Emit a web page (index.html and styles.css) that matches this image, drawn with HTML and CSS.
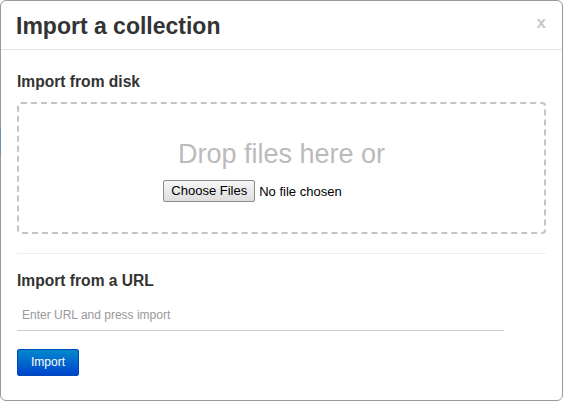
FILE: index.html
```html
<!DOCTYPE html>
<html>
<head>
<meta charset="utf-8">
<link rel="stylesheet" href="styles.css">
</head>
<body>
<div class="backdrop-tab"></div>
<div class="modal">
  <div class="modal-header">
    <h3 class="title">Import a collection</h3>
    <span class="close">x</span>
  </div>
  <div class="modal-body">
    <h4 class="section-title">Import from disk</h4>
    <div class="dropzone">
      <div class="drop-text">Drop files here or</div>
      <div class="file-row">
        <span class="file-btn">Choose Files</span>
        <span class="file-status">No file chosen</span>
      </div>
    </div>
    <div class="divider"></div>
    <h4 class="section-title url-title">Import from a URL</h4>
    <div class="url-input">Enter URL and press import</div>
    <span class="btn-primary">Import</span>
  </div>
</div>
</body>
</html>
```
FILE: styles.css
```css
html, body {
  margin: 0;
  padding: 0;
  background: #fff;
}
body {
  font-family: "Liberation Sans", Arial, sans-serif;
  color: #333;
  position: relative;
  width: 563px;
  height: 401px;
  overflow: hidden;
}
.backdrop-tab {
  position: absolute;
  left: 0;
  top: 128px;
  width: 1px;
  height: 27px;
  background: #6b8fb8;
}
.modal {
  box-sizing: border-box;
  width: 563px;
  height: 401px;
  border: 1px solid #999;
  border-radius: 6px;
  background: #fff;
}
.modal-header {
  display: flex;
  justify-content: space-between;
  align-items: center;
  height: 48px;
  padding: 0 15px 0 15px;
  border-bottom: 1px solid #e5e5e5;
}
.title {
  margin: 0;
  font-size: 23px;
  line-height: 30px;
  font-weight: bold;
  color: #333;
  padding-top: 1px;
}
.close {
  font-size: 17px;
  font-weight: bold;
  color: #c8c8c8;
  line-height: 20px;
  margin-top: -4px;
  padding-right: 1px;
}
.modal-body {
  padding: 22px 16px 0 16px;
}
.section-title {
  margin: 0;
  font-size: 15.6px;
  line-height: 20px;
  font-weight: bold;
  color: #333;
}
.dropzone {
  box-sizing: border-box;
  margin-top: 10px;
  height: 132px;
  border: 2px dashed #c4c4c4;
  border-radius: 4px;
  display: flex;
  flex-direction: column;
  align-items: center;
  padding-top: 35px;
}
.drop-text {
  font-size: 27px;
  line-height: 30px;
  color: #bbb;
}
.file-row {
  display: flex;
  align-items: center;
  margin-top: 11px;
  margin-right: 58px;
  font-size: 13px;
}
.file-btn {
  box-sizing: border-box;
  height: 22px;
  padding: 0 7px;
  line-height: 20px;
  border: 1px solid #8a8a8a;
  border-radius: 2px;
  background: linear-gradient(#f6f6f6, #dedede);
  color: #000;
  font-size: 13px;
}
.file-status {
  margin-left: 4px;
  color: #000;
}
.divider {
  margin-top: 19px;
  height: 1px;
  background: #eee;
}
.url-title {
  margin-top: 17px;
}
.url-input {
  box-sizing: border-box;
  width: 487px;
  height: 32px;
  margin-top: 8px;
  padding: 9px 5px 0 5px;
  font-size: 12px;
  color: #999;
  border-bottom: 1px solid #ccc;
}
.btn-primary {
  display: inline-block;
  box-sizing: border-box;
  margin-top: 18px;
  width: 62px;
  height: 27px;
  line-height: 25px;
  text-align: center;
  font-size: 12px;
  color: #fff;
  background: linear-gradient(#0088cc, #0044cc);
  border: 1px solid #0049b8;
  border-radius: 2px;
}
```
